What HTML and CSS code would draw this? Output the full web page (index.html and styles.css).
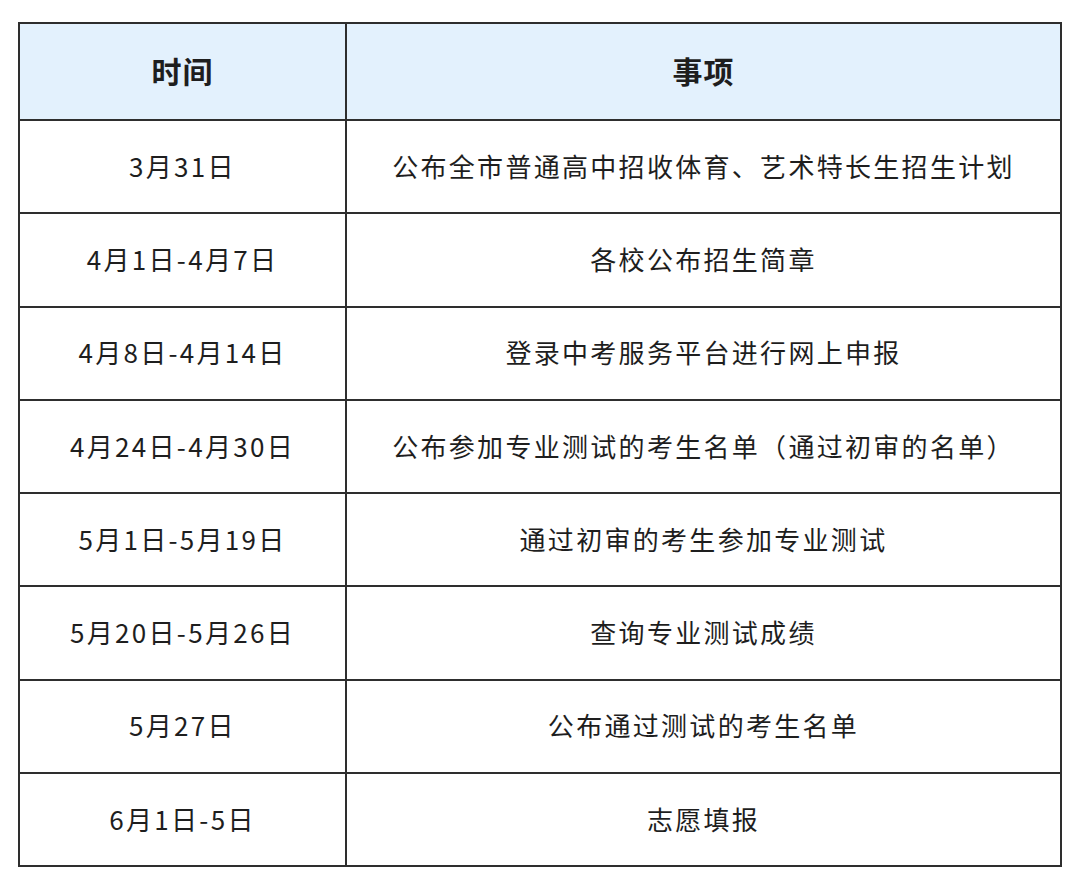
FILE: index.html
```html
<!DOCTYPE html>
<html lang="zh">
<head>
<meta charset="utf-8">
<link rel="stylesheet" href="styles.css">
</head>
<body>
<table class="schedule">
  <thead>
    <tr><th class="col-time">时间</th><th class="col-item">事项</th></tr>
  </thead>
  <tbody>
    <tr><td>3月31日</td><td>公布全市普通高中招收体育、艺术特长生招生计划</td></tr>
    <tr><td>4月1日-4月7日</td><td>各校公布招生简章</td></tr>
    <tr><td>4月8日-4月14日</td><td>登录中考服务平台进行网上申报</td></tr>
    <tr><td>4月24日-4月30日</td><td>公布参加专业测试的考生名单（通过初审的名单）</td></tr>
    <tr><td>5月1日-5月19日</td><td>通过初审的考生参加专业测试</td></tr>
    <tr><td>5月20日-5月26日</td><td>查询专业测试成绩</td></tr>
    <tr><td>5月27日</td><td>公布通过测试的考生名单</td></tr>
    <tr><td>6月1日-5日</td><td>志愿填报</td></tr>
  </tbody>
</table>
</body>
</html>
```
FILE: styles.css
```css
html, body {
  margin: 0;
  padding: 0;
  background: #ffffff;
}
body {
  padding: 22px 0 0 18px;
  font-family: "Noto Sans CJK SC", "Noto Sans", sans-serif;
  color: #1e1e1e;
}
.schedule {
  border-collapse: collapse;
  width: 1044px;
  table-layout: fixed;
}
.schedule th,
.schedule td {
  border: 2px solid #2e2e2e;
  text-align: center;
  vertical-align: middle;
  padding: 0 0 3px 0;
}
.schedule th {
  height: 92px;
  background: #e3f1fd;
  font-size: 30px;
  font-weight: 700;
  letter-spacing: 1px;
}
.schedule td {
  height: 88.3px;
  font-size: 26px;
  letter-spacing: 2.3px;
}
.col-time {
  width: 325px;
}
```
